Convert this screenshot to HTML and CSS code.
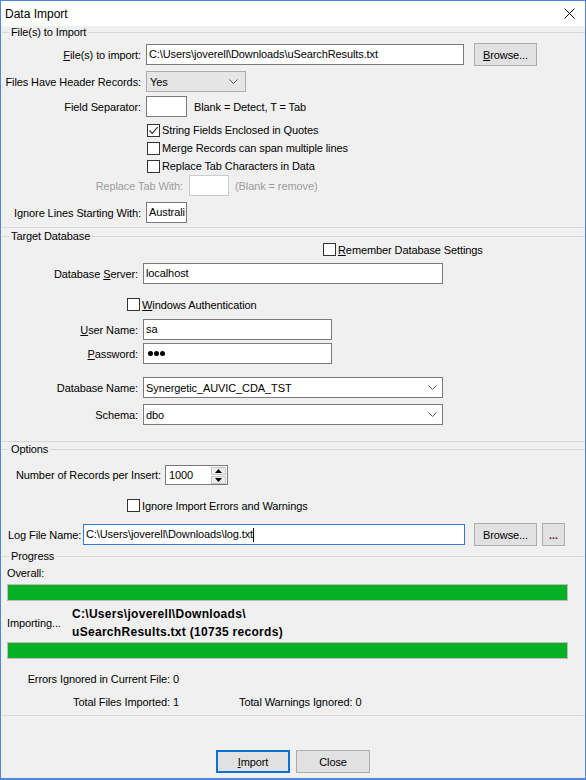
FILE: index.html
```html
<!DOCTYPE html>
<html lang="en">
<head>
    <meta charset="UTF-8">
    <meta name="viewport" content="width=device-width, initial-scale=1.0">
    <title>Data Import</title>
    <link rel="stylesheet" href="styles.css">
</head>
<body>
<div class="window">
    <div class="titlebar">
        <span class="title">Data Import</span>
        <svg class="close" width="11" height="11" viewBox="0 0 11 11"><path d="M0.5 0.5L10.5 10.5M10.5 0.5L0.5 10.5" stroke="#000" stroke-width="1" fill="none"/></svg>
    </div>

    <!-- source files -->
    <div class="group group-files">
        <div class="group-title"><span>File(s) to Import</span></div>
        <div class="row row-file">
            <span class="lbl lbl-files"><u>F</u>ile(s) to import:</span>
            <div class="field field-file">C:\Users\joverell\Downloads\uSearchResults.txt</div>
            <button class="btn btn-browse"><u>B</u>rowse...</button>
        </div>
        <div class="row row-header">
            <span class="lbl lbl-files">Files Have Header Records:</span>
            <div class="combo combo-header">
                <span>Yes</span>
                <svg width="9" height="5" viewBox="0 0 9 5"><path d="M0.5 0.5L4.5 4.5L8.5 0.5" stroke="#555" fill="none"/></svg>
            </div>
        </div>
        <div class="row row-sep">
            <span class="lbl lbl-files">Field Separator:</span>
            <div class="field field-short"></div>
            <span class="hint">Blank = Detect, T = Tab</span>
        </div>
        <div class="checks">
            <div class="check-row">
                <span class="box"><svg width="11" height="11" viewBox="0 0 11 11"><path d="M1.5 5.5L4.2 8.3L9.6 2.2" stroke="#333" stroke-width="1.2" fill="none"/></svg></span>
                <span>String Fields Enclosed in Quotes</span>
            </div>
            <div class="check-row">
                <span class="box"></span>
                <span>Merge Records can span multiple lines</span>
            </div>
            <div class="check-row">
                <span class="box"></span>
                <span>Replace Tab Characters in Data</span>
            </div>
        </div>
        <div class="row row-replace disabled">
            <span class="lbl lbl-replace">Replace Tab With:</span>
            <div class="field field-short field-disabled"></div>
            <span class="hint hint-replace">(Blank = remove)</span>
        </div>
        <div class="row row-ignore">
            <span class="lbl lbl-files">Ignore Lines Starting With:</span>
            <div class="field field-short">Australi</div>
        </div>
    </div>

    <!-- connection -->
    <div class="group group-db">
        <div class="group-title"><span>Target Database</span></div>
        <div class="check-row row-remember">
            <span class="box"></span>
            <span><u>R</u>emember Database Settings</span>
        </div>
        <div class="row row-server">
            <span class="lbl lbl-db">Database <u>S</u>erver:</span>
            <div class="field field-wide">localhost</div>
        </div>
        <div class="check-row row-winauth">
            <span class="box"></span>
            <span><u>W</u>indows Authentication</span>
        </div>
        <div class="row row-user">
            <span class="lbl lbl-db"><u>U</u>ser Name:</span>
            <div class="field field-mid">sa</div>
        </div>
        <div class="row row-pass">
            <span class="lbl lbl-db"><u>P</u>assword:</span>
            <div class="field field-mid">
                <span class="dots"><i></i><i></i><i></i></span>
            </div>
        </div>
        <div class="row row-dbname">
            <span class="lbl lbl-db">Database Name:</span>
            <div class="combo combo-wide">
                <span>Synergetic_AUVIC_CDA_TST</span>
                <svg width="9" height="5" viewBox="0 0 9 5"><path d="M0.5 0.5L4.5 4.5L8.5 0.5" stroke="#555" fill="none"/></svg>
            </div>
        </div>
        <div class="row row-schema">
            <span class="lbl lbl-db">Schema:</span>
            <div class="combo combo-wide">
                <span>dbo</span>
                <svg width="9" height="5" viewBox="0 0 9 5"><path d="M0.5 0.5L4.5 4.5L8.5 0.5" stroke="#555" fill="none"/></svg>
            </div>
        </div>
    </div>

    <!-- options -->
    <div class="group group-options">
        <div class="group-title"><span>Options</span></div>
        <div class="row row-records">
            <span class="lbl lbl-records">Number of Records per Insert:</span>
            <div class="spin">
                <span class="spin-value">1000</span>
                <div class="spin-btns">
                    <span class="spin-btn"><svg width="7" height="4" viewBox="0 0 7 4"><path d="M0 4L3.5 0L7 4Z" fill="#000"/></svg></span>
                    <span class="spin-btn"><svg width="7" height="4" viewBox="0 0 7 4"><path d="M0 0L3.5 4L7 0Z" fill="#000"/></svg></span>
                </div>
            </div>
        </div>
        <div class="check-row row-ignore-errors">
            <span class="box"></span>
            <span>Ignore Import Errors and Warnings</span>
        </div>
        <div class="row row-log">
            <span class="lbl-log">Log File Name:</span>
            <div class="field field-log">C:\Users\joverell\Downloads\log.txt<span class="caret"></span></div>
            <button class="btn btn-browse">Browse...</button>
            <button class="btn btn-more">...</button>
        </div>
    </div>

    <!-- progress -->
    <div class="group group-progress">
        <div class="group-title"><span>Progress</span></div>
        <div class="overall">Overall:</div>
        <div class="progress"><div class="progress-fill" style="width:100%"></div></div>
        <div class="importing">
            <span class="importing-lbl">Importing...</span>
            <div class="importing-file">C:\Users\joverell\Downloads\<br>uSearchResults.txt (10735 records)</div>
        </div>
        <div class="progress progress-file"><div class="progress-fill" style="width:100%"></div></div>
        <div class="stats stats-errors">
            <span class="stat">Errors Ignored in Current File: 0</span>
        </div>
        <div class="stats stats-totals">
            <span class="stat">Total Files Imported: 1</span>
            <span class="stat-warn">Total Warnings Ignored: 0</span>
        </div>
    </div>

    <div class="footer">
        <button class="btn btn-default"><u>I</u>mport</button>
        <button class="btn">Close</button>
    </div>
</div>
</body>
</html>
```

FILE: styles.css
```css
body {
    margin: 0;
    font-family: "Liberation Sans", Arial, sans-serif;
    font-size: 11px;
    letter-spacing: -0.1px;
    color: #000;
}
u {
    text-decoration-thickness: 1px;
    text-underline-offset: 1px;
}
.window {
    width: 586px;
    height: 780px;
    box-sizing: border-box;
    border: 1px solid #4f86d6;
    border-bottom-width: 2px;
    background: #f0f0f0;
    display: flex;
    flex-direction: column;
}
.titlebar {
    height: 25px;
    flex-shrink: 0;
    background: #fff;
    display: flex;
    align-items: center;
    justify-content: space-between;
    padding: 0 10px 0 4px;
}
.title {
    font-size: 12px;
    letter-spacing: 0;
}

/* group boxes: legend sits on the top line */
.group {
    margin-left: 1px;
    border-bottom: 1px solid #d7d7d7;
}
.group-title {
    display: flex;
    align-items: center;
    height: 13px;
    line-height: 13px;
}
.group-title::before {
    content: "";
    width: 7px;
    border-top: 1px solid #d7d7d7;
}
.group-title::after {
    content: "";
    flex: 1;
    border-top: 1px solid #d7d7d7;
}
.group-title span {
    padding: 0 2px;
}
.group-files {
    padding-bottom: 4px;
}
.group-db {
    margin-top: 2px;
    padding-bottom: 16px;
}
.group-options {
    margin-top: 1px;
    border-bottom: none;
}
.group-progress {
    margin-top: 4px;
    padding-bottom: 6px;
}

.row {
    display: flex;
    align-items: center;
}
.lbl {
    flex-shrink: 0;
    text-align: right;
    white-space: nowrap;
}
.lbl-files {
    width: 139px;
    margin-right: 5px;
}
.lbl-replace {
    width: 181px;
    margin-right: 6px;
}
.lbl-db {
    width: 136px;
    margin-right: 5px;
}
.lbl-records {
    width: 159px;
    margin-right: 4px;
}
.lbl-log {
    width: 81px;
    flex-shrink: 0;
    box-sizing: border-box;
    padding-left: 6px;
}
.hint {
    margin-left: 7px;
}
.hint-replace {
    margin-left: 6px;
}
.disabled {
    color: #9d9d9d;
}

.field {
    height: 21px;
    box-sizing: border-box;
    border: 1px solid #7a7a7a;
    background: #fff;
    padding: 0 2px;
    line-height: 19px;
    white-space: nowrap;
    overflow: hidden;
    display: flex;
    align-items: center;
}
.field-file {
    width: 318px;
}
.field-short {
    width: 41px;
}
.field-disabled {
    width: 40px;
    border-color: #cccccc;
}
.field-wide {
    width: 300px;
}
.field-mid {
    width: 189px;
}
.field-log {
    width: 382px;
    border-color: #2f79d8;
}
.caret {
    display: inline-block;
    width: 1px;
    height: 14px;
    background: #000;
}
.dots {
    display: flex;
    gap: 1px;
    padding-left: 2px;
}
.dots i {
    width: 5px;
    height: 5px;
    border-radius: 50%;
    background: #000;
}

.combo {
    height: 21px;
    box-sizing: border-box;
    border: 1px solid #7a7a7a;
    background: #fff;
    display: flex;
    align-items: center;
    justify-content: space-between;
    padding: 0 5px 0 2px;
}
.combo-header {
    width: 100px;
    background: #e5e5e5;
    border-color: #acacac;
    padding-left: 3px;
    padding-right: 7px;
}
.combo-wide {
    width: 300px;
}

.btn {
    height: 23px;
    box-sizing: border-box;
    border: 1px solid #adadad;
    background: #e1e1e1;
    font: inherit;
    letter-spacing: inherit;
    color: #000;
    padding: 0;
}
.btn-browse {
    width: 63px;
    margin-left: 10px;
}
.row-log .btn-browse {
    margin-left: 9px;
}
.btn-more {
    width: 23px;
    margin-left: 5px;
    color: #7a1f1f;
    font-weight: bold;
}
.btn-default {
    border: 2px solid #0a72d4;
}

.box {
    width: 13px;
    height: 13px;
    flex-shrink: 0;
    box-sizing: border-box;
    border: 1px solid #333;
    background: #fff;
    margin-right: 2px;
    display: flex;
}
.check-row {
    display: flex;
    align-items: center;
    height: 18px;
}
.checks {
    margin-top: 4px;
    padding-left: 145px;
}

/* vertical spacing of the dialog rows */
.row-file {
    margin-top: 4px;
    height: 23px;
}
.row-header {
    margin-top: 5px;
}
.row-sep {
    margin-top: 4px;
}
.row-ignore {
    margin-top: 6px;
}
.row-remember {
    height: 13px;
    padding-left: 321px;
}
.row-server {
    margin-top: 7px;
}
.row-winauth {
    height: 13px;
    margin-top: 14px;
    padding-left: 125px;
}
.row-user {
    margin-top: 8px;
}
.row-pass {
    margin-top: 3px;
}
.row-dbname {
    margin-top: 13px;
}
.row-schema {
    margin-top: 6px;
}
.row-records {
    margin-top: 9px;
}
.row-ignore-errors {
    height: 13px;
    margin-top: 14px;
    padding-left: 125px;
}
.row-log {
    margin-top: 11px;
    height: 23px;
}

.spin {
    width: 63px;
    height: 20px;
    box-sizing: border-box;
    border: 1px solid #7a7a7a;
    background: #fff;
    display: flex;
    align-items: center;
    justify-content: space-between;
}
.spin-value {
    padding-left: 3px;
}
.spin-btns {
    display: flex;
    flex-direction: column;
    gap: 1px;
    margin-right: 1px;
}
.spin-btn {
    width: 15px;
    height: 8px;
    box-sizing: border-box;
    border: 1px solid #c4c4c4;
    background: #ececec;
    display: flex;
    align-items: center;
    justify-content: center;
}

.overall {
    margin-top: 4px;
    padding-left: 5px;
    line-height: 13px;
}
.progress {
    margin: 4px 0 0 5px;
    width: 561px;
    height: 17px;
    box-sizing: border-box;
    border: 1px solid #bcbcbc;
    background: #e6e6e6;
}
.progress-file {
    margin-top: 1px;
}
.progress-fill {
    height: 100%;
    background: #06b025;
}
.importing {
    margin-top: 4px;
    display: flex;
    align-items: center;
    padding-left: 5px;
}
.importing-lbl {
    width: 65px;
    flex-shrink: 0;
}
.importing-file {
    font-weight: bold;
    font-size: 12px;
    letter-spacing: 0.3px;
    line-height: 18px;
}
.stats {
    display: flex;
    line-height: 14px;
}
.stats-errors {
    margin-top: 13px;
}
.stats-totals {
    margin-top: 9px;
}
.stat {
    width: 177px;
    text-align: right;
}
.stat-warn {
    margin-left: 60px;
}

.footer {
    margin-top: 34px;
    display: flex;
    justify-content: center;
    gap: 6px;
}
.footer .btn {
    width: 74px;
}
```
